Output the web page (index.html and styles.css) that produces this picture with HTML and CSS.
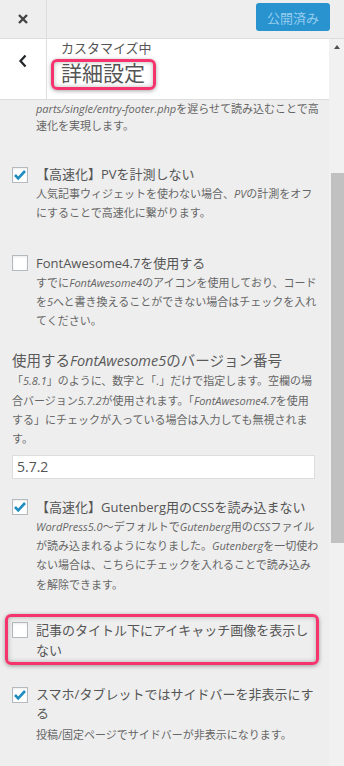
FILE: index.html
```html
<!DOCTYPE html>
<html lang="ja">
<head>
    <meta charset="UTF-8">
    <meta name="viewport" content="width=device-width, initial-scale=1.0">
    <title>カスタマイズ中 詳細設定</title>
    <link rel="stylesheet" href="styles.css">
</head>
<body>
    <div class="topbar">
        <button class="close-button" aria-label="閉じる">
            <svg width="12" height="12" viewBox="0 0 12 12"><path d="M2 2 L10 10 M10 2 L2 10" stroke="#444" stroke-width="2.4" fill="none"/></svg>
        </button>
        <button class="publish-button" disabled>公開済み</button>
    </div>
    <div class="main">
        <div class="panel">
            <div class="section-header">
                <button class="back-button" aria-label="戻る">
                    <svg width="10" height="14" viewBox="0 0 10 14"><polyline points="7.5,1.5 2.5,7 7.5,12.5" stroke="#23282d" stroke-width="2.3" fill="none"/></svg>
                </button>
                <div class="section-title">
                    <span class="customize-action">カスタマイズ中</span>
                    <h3 class="title"><span class="marked">詳細設定</span></h3>
                </div>
            </div>
            <div class="controls">
                <p class="desc desc-cut"><i>parts/single/entry-footer.php</i>を遅らせて読み込むことで高<br>速化を実現します。</p>

                <div class="control control-pv">
                    <label class="check">
                        <span class="box"><svg width="14" height="14" viewBox="0 0 14 14"><path d="M2 7 L5.2 10.4 L12 3" stroke="#1e8cbe" stroke-width="2.6" fill="none"/></svg></span>
                        <span class="label">【高速化】PVを計測しない</span>
                    </label>
                    <p class="desc">人気記事ウィジェットを使わない場合、<i>PV</i>の計測をオフ<br>にすることで高速化に繋がります。</p>
                </div>

                <div class="control control-fa">
                    <label class="check">
                        <span class="box"></span>
                        <span class="label">FontAwesome4.7を使用する</span>
                    </label>
                    <p class="desc">すでに<i>FontAwesome4</i>のアイコンを使用しており、コード<br>を<i>5</i>へと書き換えることができない場合はチェックを入れ<br>てください。</p>
                </div>

                <div class="control control-text">
                    <span class="field-title">使用する<i>FontAwesome5</i>のバージョン番号</span>
                    <p class="desc desc-flush">「<i>5.8.1</i>」のように、数字と「<i>.</i>」だけで指定します。空欄の場<br>合バージョン<i>5.7.2</i>が使用されます。「<i>FontAwesome4.7</i>を使用<br>する」にチェックが入っている場合は入力しても無視されま<br>す。</p>
                    <input class="text-input" type="text" value="5.7.2">
                </div>

                <div class="control control-gutenberg">
                    <label class="check">
                        <span class="box"><svg width="14" height="14" viewBox="0 0 14 14"><path d="M2 7 L5.2 10.4 L12 3" stroke="#1e8cbe" stroke-width="2.6" fill="none"/></svg></span>
                        <span class="label">【高速化】Gutenberg用のCSSを読み込まない</span>
                    </label>
                    <p class="desc"><i>WordPress5.0</i>〜デフォルトで<i>Gutenberg</i>用の<i>CSS</i>ファイル<br>が読み込まれるようになりました。<i>Gutenberg</i>を一切使わ<br>ない場合は、こちらにチェックを入れることで読み込み<br>を解除できます。</p>
                </div>

                <div class="control control-marked">
                    <label class="check check-tall">
                        <span class="box"></span>
                        <span class="label">記事のタイトル下にアイキャッチ画像を表示し<br>ない</span>
                    </label>
                </div>

                <div class="control control-sidebar">
                    <label class="check">
                        <span class="box"><svg width="14" height="14" viewBox="0 0 14 14"><path d="M2 7 L5.2 10.4 L12 3" stroke="#1e8cbe" stroke-width="2.6" fill="none"/></svg></span>
                        <span class="label">スマホ/タブレットではサイドバーを非表示にす<br>る</span>
                    </label>
                    <p class="desc desc-after">投稿/固定ページでサイドバーが非表示になります。</p>
                </div>
            </div>
        </div>
        <div class="scrollbar">
            <span class="arrow-up"></span>
            <span class="thumb"></span>
        </div>
    </div>
</body>
</html>
```

FILE: styles.css
```css
html, body {
    height: 100%;
}
body {
    margin: 0;
    overflow: hidden;
    display: flex;
    flex-direction: column;
    background-color: #eee;
    font-family: "Open Sans", "Noto Sans CJK JP", sans-serif;
    color: #555;
}
button {
    font-family: inherit;
    border: none;
    background: none;
    padding: 0;
    cursor: pointer;
}
.topbar {
    height: 38px;
    flex-shrink: 0;
    display: flex;
    justify-content: space-between;
    background-color: #eee;
    border-bottom: 1px solid #ddd;
}
.close-button {
    width: 47px;
    border-right: 1px solid #ddd;
    display: flex;
    align-items: center;
    justify-content: center;
}
.publish-button {
    align-self: flex-start;
    margin: 3px 14px 0 0;
    height: 28px;
    width: 74px;
    border-radius: 3px;
    background-color: #2993cf;
    color: #95cdee;
    font-size: 13px;
    font-weight: 400;
}
.main {
    flex: 1;
    display: flex;
    min-height: 0;
}
.panel {
    flex: 1;
    display: flex;
    flex-direction: column;
}
.section-header {
    height: 60px;
    display: flex;
    background-color: #fff;
    border-bottom: 1px solid #ddd;
}
.back-button {
    width: 47px;
    border-right: 1px solid #ddd;
    display: flex;
    justify-content: center;
    align-items: flex-start;
    padding-top: 15px;
}
.section-title {
    padding-left: 14px;
    display: flex;
    flex-direction: column;
    align-items: flex-start;
}
.customize-action {
    font-size: 13px;
    line-height: 18px;
    color: #555;
}
.title {
    margin: 1px 0 0;
    font-size: 21px;
    line-height: 30px;
    font-weight: 400;
    color: #555;
}
.marked {
    position: relative;
    display: inline-block;
}
.marked::after,
.control-marked::after {
    content: "";
    position: absolute;
    border: 3px solid #f5336c;
    border-radius: 6px;
    box-shadow: 0 1px 4px rgba(0, 0, 0, 0.35), inset 0 0 5px rgba(0, 0, 0, 0.28);
    pointer-events: none;
}
.marked::after {
    top: 1px;
    bottom: -2px;
    left: -10px;
    right: -11px;
}
.controls {
    padding: 0 10px 0 12px;
}
.desc {
    margin: 0 0 0 24px;
    font-size: 11px;
    line-height: 19.3px;
    color: #666;
    white-space: nowrap;
}
.desc-cut {
    line-height: 17px;
}
.desc-flush {
    margin-left: 0;
}
.desc-after {
    margin-top: 2px;
    line-height: 19px;
}
.control {
    margin-top: 31px;
}
.control-text {
    margin-top: 21px;
}
.control-gutenberg {
    margin-top: 19px;
}
.control-marked {
    position: relative;
    margin-top: 26px;
}
.control-marked::after {
    top: -6px;
    bottom: -5px;
    left: -7px;
    right: 0;
}
.control-sidebar {
    margin-top: 25.5px;
}
.check {
    display: flex;
    align-items: flex-start;
    gap: 8px;
}
.box {
    width: 16px;
    height: 16px;
    margin-top: 1.5px;
    box-sizing: border-box;
    flex-shrink: 0;
    display: flex;
    align-items: center;
    justify-content: center;
    border: 1px solid #b4b9be;
    background-color: #fff;
    box-shadow: inset 0 1px 2px rgba(0, 0, 0, 0.08);
}
.label {
    font-size: 13px;
    line-height: 19px;
    color: #555;
    white-space: nowrap;
}
.check-tall .label {
    line-height: 20px;
}
.check-tall .box {
    margin-top: 2px;
}
.field-title {
    display: block;
    font-size: 14.5px;
    line-height: 20px;
    color: #5a5a5a;
}
.text-input {
    display: block;
    margin-top: 6px;
    width: 303px;
    height: 24px;
    box-sizing: border-box;
    padding: 0 4px;
    border: 1px solid #ddd;
    background-color: #fff;
    font-family: inherit;
    font-size: 14px;
    color: #555;
}
.scrollbar {
    width: 16px;
    flex-shrink: 0;
    background-color: #f1f1f1;
    display: flex;
    flex-direction: column;
    align-items: center;
}
.arrow-up {
    margin-top: 6px;
    width: 0;
    height: 0;
    border-left: 3.5px solid transparent;
    border-right: 3.5px solid transparent;
    border-bottom: 4px solid #505050;
}
.thumb {
    margin-top: 124px;
    margin-left: 2px;
    width: 13px;
    height: 370px;
    background-color: #c1c1c1;
}
```
